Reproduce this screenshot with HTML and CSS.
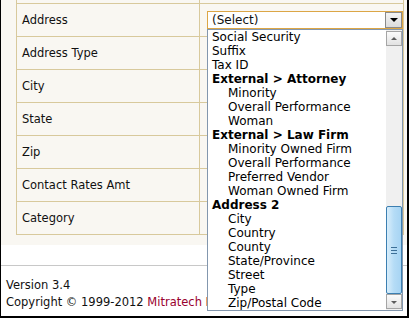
FILE: index.html
```html
<!DOCTYPE html>
<html lang="en">

<head>
  <meta charset="UTF-8">
  <title>Address fields</title>
  <link rel="stylesheet" href="styles.css">
</head>

<body>
  <div id="app">
    <div class="content">
      <div class="fields">
        <div class="row spacer">
          <div class="label"></div>
          <div class="value"></div>
        </div>
        <div class="row">
          <div class="label">Address</div>
          <div class="value">
            <div class="combo">
              <div class="select">
                <span>(Select)</span>
                <div class="arrow"></div>
              </div>
              <div class="list">
                <ul class="options">
                  <li>Social Security</li>
                  <li>Suffix</li>
                  <li>Tax ID</li>
                  <li class="group">External &gt; Attorney</li>
                  <li class="sub">Minority</li>
                  <li class="sub">Overall Performance</li>
                  <li class="sub">Woman</li>
                  <li class="group">External &gt; Law Firm</li>
                  <li class="sub">Minority Owned Firm</li>
                  <li class="sub">Overall Performance</li>
                  <li class="sub">Preferred Vendor</li>
                  <li class="sub">Woman Owned Firm</li>
                  <li class="group">Address 2</li>
                  <li class="sub">City</li>
                  <li class="sub">Country</li>
                  <li class="sub">County</li>
                  <li class="sub">State/Province</li>
                  <li class="sub">Street</li>
                  <li class="sub">Type</li>
                  <li class="sub">Zip/Postal Code</li>
                </ul>
                <div class="scrollbar">
                  <div class="sb-btn up"></div>
                  <div class="sb-track">
                    <div class="sb-thumb"><span class="grip"></span></div>
                  </div>
                  <div class="sb-btn down"></div>
                </div>
              </div>
            </div>
          </div>
        </div>
        <div class="row">
          <div class="label">Address Type</div>
          <div class="value"></div>
        </div>
        <div class="row">
          <div class="label">City</div>
          <div class="value"></div>
        </div>
        <div class="row">
          <div class="label">State</div>
          <div class="value"></div>
        </div>
        <div class="row">
          <div class="label">Zip</div>
          <div class="value"></div>
        </div>
        <div class="row">
          <div class="label">Contact Rates Amt</div>
          <div class="value"></div>
        </div>
        <div class="row">
          <div class="label">Category</div>
          <div class="value"></div>
        </div>
      </div>
    </div>

    <div class="footer">
      <div>Version 3.4</div>
      <div>Copyright &copy; 1999-2012 <span class="brand">Mitratech Holdings</span></div>
    </div>
  </div>
</body>

</html>
```

FILE: styles.css
```css
html,
body {
  margin: 0;
  padding: 0;
  background-color: #fff;
}

#app {
  width: 409px;
  height: 318px;
  box-sizing: border-box;
  border-left: 1px solid #000;
  border-right: 2px solid #000;
  border-bottom: 2px solid #000;
  overflow: hidden;
  font-family: "DejaVu Sans", Verdana, sans-serif;
  color: #111;
}

.content {
  background-color: #f9f7f2;
  padding: 0 0 10px 15px;
}

.fields {
  width: 388px;
  box-sizing: border-box;
  border-left: 1px solid #d8c99c;
  border-right: 1px solid #d8c99c;
}

.row {
  display: grid;
  grid-template-columns: 183px 1fr;
  height: 32px;
  border-bottom: 1px solid #d8c99c;
}

.row.spacer {
  height: 3px;
}

.label {
  border-right: 1px solid #d8c99c;
  display: flex;
  align-items: center;
  padding-left: 5px;
  font-size: 11.5px;
}

.value {
  display: flex;
  align-items: center;
  padding-left: 7px;
}

.combo {
  position: relative;
  width: 196px;
}

.select {
  height: 18px;
  box-sizing: border-box;
  border: 1px solid #dca646;
  background-color: #fff;
  display: flex;
  align-items: center;
  justify-content: space-between;
  font-size: 12px;
  padding-left: 4px;
}

.arrow {
  width: 17px;
  height: 16px;
  box-sizing: border-box;
  border: 1px solid #8a8a8a;
  background: linear-gradient(#f4f4f4, #dcdcdc);
  position: relative;
}

.arrow::after {
  content: "";
  position: absolute;
  left: 4px;
  top: 5px;
  border-left: 4px solid transparent;
  border-right: 4px solid transparent;
  border-top: 4px solid #000;
}

.list {
  position: absolute;
  top: 18px;
  left: 0;
  width: 196px;
  height: 282px;
  box-sizing: border-box;
  border: 1px solid #8397ae;
  background-color: #fff;
  display: flex;
  z-index: 2;
}

.options {
  list-style: none;
  margin: 0;
  padding: 0;
  flex: 1;
  font-size: 12px;
  line-height: 14px;
  color: #000;
}

.options li {
  padding-left: 4px;
  white-space: nowrap;
}

.options .group {
  font-weight: bold;
}

.options .sub {
  padding-left: 20px;
}

.scrollbar {
  width: 16px;
  display: flex;
  flex-direction: column;
  background-color: #f0f0f0;
  padding: 1px 0;
}

.sb-btn {
  height: 15px;
  box-sizing: border-box;
  border: 1px solid #a5a5a5;
  background: linear-gradient(#fbfbfb, #e2e2e2);
  position: relative;
}

.sb-btn::after {
  content: "";
  position: absolute;
  left: 4px;
  border-left: 3px solid transparent;
  border-right: 3px solid transparent;
}

.sb-btn.up::after {
  top: 5px;
  border-bottom: 3px solid #5c5c5c;
}

.sb-btn.down::after {
  top: 6px;
  border-top: 3px solid #5c5c5c;
}

.sb-track {
  flex: 1;
  display: flex;
  flex-direction: column;
  justify-content: flex-end;
}

.sb-thumb {
  height: 88px;
  box-sizing: border-box;
  border: 1px solid #3c7fb1;
  border-radius: 2px;
  background: linear-gradient(90deg, #d9eefb, #b5dcf6 50%, #a7d4f3);
  display: flex;
  align-items: center;
  justify-content: center;
}

.grip {
  width: 6px;
  height: 7px;
  border-top: 1px solid #3c6f97;
  border-bottom: 1px solid #3c6f97;
  box-sizing: border-box;
  position: relative;
}

.grip::after {
  content: "";
  position: absolute;
  left: 0;
  right: 0;
  top: 2px;
  border-top: 1px solid #3c6f97;
}

.footer {
  margin-top: 20px;
  border-top: 1px solid #c8c8c8;
  padding: 11px 0 0 5px;
  font-size: 11.5px;
  line-height: 17px;
  color: #111;
  white-space: nowrap;
}

.brand {
  color: #99002e;
}
```
